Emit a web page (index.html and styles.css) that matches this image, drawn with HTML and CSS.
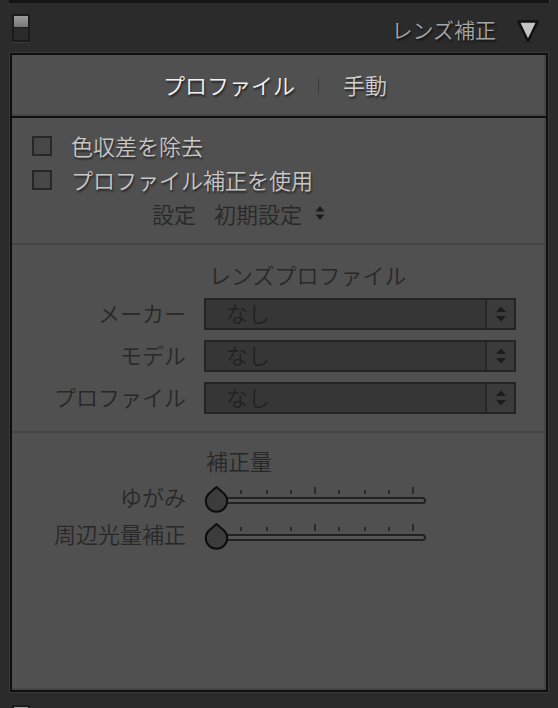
FILE: index.html
```html
<!DOCTYPE html>
<html lang="ja">
<head>
<meta charset="utf-8">
<title>レンズ補正</title>
<link rel="stylesheet" href="styles.css">
</head>
<body>
<div class="topstrip"></div>
<header class="hdr">
  <div class="switch"></div>
  <span class="hdr-title">レンズ補正</span>
  <svg class="hdr-tri" width="24" height="26" viewBox="0 0 24 26"><path d="M2.5 3.5 L21.5 3.5 L12 23 Z" fill="#c4c4c4" stroke="#111" stroke-width="2.5" stroke-linejoin="round"/></svg>
</header>
<section class="panel">
  <nav class="tabs">
    <span class="tab active">プロファイル</span>
    <span class="tab-sep"></span>
    <span class="tab">手動</span>
  </nav>
  <div class="group basic">
    <label class="check"><span class="box"></span><span class="check-text">色収差を除去</span></label>
    <label class="check"><span class="box"></span><span class="check-text">プロファイル補正を使用</span></label>
    <div class="setting">
      <span class="dark">設定</span>
      <span class="dark val">初期設定</span>
      <svg class="updown" width="10" height="16" viewBox="0 0 10 16"><path d="M5 1 L9.5 6.5 L0.5 6.5 Z M5 15 L9.5 9.5 L0.5 9.5 Z" fill="#1e1e1e"/></svg>
    </div>
  </div>
  <div class="group lens">
    <div class="heading lens-h">レンズプロファイル</div>
    <div class="form">
      <span class="lbl">メーカー</span>
      <div class="select"><span class="sel-text">なし</span><span class="sel-arrows"><svg width="12" height="18" viewBox="0 0 12 18"><path d="M6 1.5 L11 7 L1 7 Z M6 16.5 L11 11 L1 11 Z" fill="#1c1c1c"/></svg></span></div>
      <span class="lbl">モデル</span>
      <div class="select"><span class="sel-text">なし</span><span class="sel-arrows"><svg width="12" height="18" viewBox="0 0 12 18"><path d="M6 1.5 L11 7 L1 7 Z M6 16.5 L11 11 L1 11 Z" fill="#1c1c1c"/></svg></span></div>
      <span class="lbl">プロファイル</span>
      <div class="select"><span class="sel-text">なし</span><span class="sel-arrows"><svg width="12" height="18" viewBox="0 0 12 18"><path d="M6 1.5 L11 7 L1 7 Z M6 16.5 L11 11 L1 11 Z" fill="#1c1c1c"/></svg></span></div>
    </div>
  </div>
  <div class="group amount">
    <div class="heading amount-h">補正量</div>
    <div class="sliders">
      <span class="lbl">ゆがみ</span>
      <svg class="slider" width="226" height="34" viewBox="0 0 226 34">
        <g fill="#2a2a2a">
          <rect x="37" y="10" width="2" height="4"/><rect x="63" y="10" width="2" height="4"/>
          <rect x="87" y="10" width="2" height="4"/><rect x="111" y="7" width="2" height="7"/>
          <rect x="135" y="10" width="2" height="4"/><rect x="161" y="10" width="2" height="4"/>
          <rect x="185" y="10" width="2" height="4"/><rect x="209" y="7" width="2" height="7"/>
        </g>
        <rect x="3" y="18" width="219" height="5" rx="2.5" fill="#555" stroke="#222" stroke-width="2"/>
        <path d="M13.5 7 L21.5 14 A10.7 10.7 0 1 1 5.5 14 Z" fill="#3c3c3c" stroke="#0d0d0d" stroke-width="2" stroke-linejoin="round"/>
      </svg>
      <span class="lbl">周辺光量補正</span>
      <svg class="slider" width="226" height="34" viewBox="0 0 226 34">
        <g fill="#2a2a2a">
          <rect x="37" y="10" width="2" height="4"/><rect x="63" y="10" width="2" height="4"/>
          <rect x="87" y="10" width="2" height="4"/><rect x="111" y="7" width="2" height="7"/>
          <rect x="135" y="10" width="2" height="4"/><rect x="161" y="10" width="2" height="4"/>
          <rect x="185" y="10" width="2" height="4"/><rect x="209" y="7" width="2" height="7"/>
        </g>
        <rect x="3" y="18" width="219" height="5" rx="2.5" fill="#555" stroke="#222" stroke-width="2"/>
        <path d="M13.5 7 L21.5 14 A10.7 10.7 0 1 1 5.5 14 Z" fill="#3c3c3c" stroke="#0d0d0d" stroke-width="2" stroke-linejoin="round"/>
      </svg>
    </div>
  </div>
</section>
<div class="next"><div class="switch"></div></div>
</body>
</html>
```
FILE: styles.css
```css
* { box-sizing: border-box; }
html, body { margin: 0; padding: 0; }
body {
  width: 558px;
  height: 708px;
  overflow: hidden;
  background: #2b2b2b;
  font-family: "Noto Sans CJK JP", "Noto Sans", sans-serif;
  font-weight: 350;
  font-size: 22px;
  color: #c6c6c6;
}
.topstrip {
  height: 3px;
  margin: 0 9px 0 9px;
  background: #141414;
  box-shadow: 1px 0 0 #3a3a3a;
}
.hdr {
  height: 50px;
  display: flex;
  align-items: center;
  padding: 0 18px 0 12px;
}
.switch {
  width: 18px;
  height: 28px;
  border: 2px solid #1c1c1c;
  background: #2b2b2b;
  box-shadow: 0 1px 0 #3a3a3a;
}
.switch::before {
  content: "";
  display: block;
  height: 11px;
  background: linear-gradient(#9c9c9c, #777);
  border-bottom: 1px solid #1c1c1c;
}
.hdr-title {
  margin-left: auto;
  margin-top: 2px;
  font-size: 21px;
  line-height: 30px;
  color: #a4a4a4;
  text-shadow: 1px 2px 2px rgba(0,0,0,0.6);
}
.hdr-tri {
  margin-left: 20px;
  margin-top: 6px;
  display: block;
}
.panel {
  margin: 0 10px;
  height: 639px;
  border: 2px solid #0f0f0f;
  background: #505050;
  box-shadow: 0 0 0 1px #383838, inset -2px -2px 0 #464646;
}
.tabs {
  height: 63px;
  display: flex;
  align-items: center;
  justify-content: center;
  padding: 0 8px 3px 0;
  border-bottom: 2px solid #111;
  box-shadow: inset 0 -2px 0 #464646;
}
.tab {
  line-height: 30px;
  color: #cfcfcf;
  text-shadow: 1px 2px 2px rgba(0,0,0,0.6);
}
.tab.active { color: #f2f2f2; }
.tab-sep {
  width: 1px;
  height: 17px;
  margin: 3px 24px 0 23px;
  background: #3c3c3c;
}
.group {
  border-top: 2px solid #454545;
}
.basic {
  border-top: 0;
  padding: 11px 0 12px 20px;
}
.check {
  display: flex;
  align-items: center;
  height: 34px;
}
.check-text {
  padding-bottom: 3px;
  text-shadow: 1px 2px 2px rgba(0,0,0,0.55);
}
.box {
  width: 20px;
  height: 20px;
  border: 2px solid #272727;
  background: #474747;
  margin-right: 19px;
}
.dark { color: #282828; }
.setting {
  height: 34px;
  display: flex;
  align-items: center;
  padding: 0 0 3px 120px;
}
.setting .val { margin-left: 18px; }
.updown { margin-left: 13px; display: block; }
.lens { padding: 14px 0 17px; }
.heading {
  height: 34px;
  line-height: 30px;
  color: #282828;
}
.lens-h { padding-left: 197px; }
.form {
  margin-top: 5px;
  display: grid;
  grid-template-columns: 174px 312px;
  column-gap: 18px;
  row-gap: 10px;
}
.lbl {
  text-align: right;
  color: #282828;
  line-height: 28px;
  padding-bottom: 4px;
}
.select {
  height: 32px;
  display: flex;
  border: 2px solid #242424;
  background: #363636;
}
.sel-text {
  flex: 1;
  padding-left: 20px;
  line-height: 25px;
  color: #222;
}
.sel-arrows {
  width: 29px;
  border-left: 2px solid #262626;
  background: #3b3b3b;
  display: flex;
  align-items: center;
  justify-content: center;
}
.sel-arrows svg { display: block; }
.amount { padding-top: 12px; }
.amount-h { padding-left: 194px; }
.sliders {
  margin-top: 1px;
  display: grid;
  grid-template-columns: 174px 226px;
  column-gap: 17px;
  row-gap: 3px;
}
.sliders .lbl { line-height: 32px; padding-bottom: 2px; }
.slider { display: block; }
.next {
  margin-top: 13px;
  padding-left: 12px;
}
```
